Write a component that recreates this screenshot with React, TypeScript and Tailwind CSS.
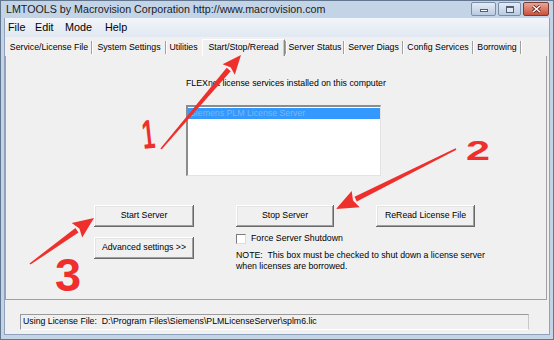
import React from 'react'

const tabs: { label: string; w: number; active?: boolean }[] = [
  { label: 'Service/License File', w: 84 },
  { label: 'System Settings', w: 72 },
  { label: 'Utilities', w: 33 },
  { label: 'Start/Stop/Reread', w: 83, active: true },
  { label: 'Server Status', w: 56 },
  { label: 'Server Diags', w: 57 },
  { label: 'Config Services', w: 68 },
  { label: 'Borrowing', w: 46 },
]

const btn =
  'h-[22px] bg-[#f0f0f0] flex items-center justify-center shadow-[inset_-1px_-1px_#696969,inset_1px_1px_#ffffff,inset_-2px_-2px_#a0a0a0,inset_2px_2px_#e3e3e3]'

function arrow(x1: number, y1: number, x2: number, y2: number, head = 20, hw = 9) {
  const dx = x2 - x1
  const dy = y2 - y1
  const len = Math.hypot(dx, dy)
  const ux = dx / len
  const uy = dy / len
  const nx = -uy
  const ny = ux
  const bx = x2 - head * ux
  const by = y2 - head * uy
  const p = (x: number, y: number) => `${x.toFixed(1)},${y.toFixed(1)}`
  const shaft = [
    p(x1 + nx * 0.8, y1 + ny * 0.8),
    p(bx + nx * 2.6, by + ny * 2.6),
    p(bx - nx * 2.6, by - ny * 2.6),
    p(x1 - nx * 0.8, y1 - ny * 0.8),
  ].join(' ')
  const tip = [p(x2, y2), p(bx + nx * hw, by + ny * hw), p(bx + ux * 3, by + uy * 3), p(bx - nx * hw, by - ny * hw)].join(' ')
  return { shaft, tip }
}

function Annotations() {
  const arrows = [arrow(160, 148, 240, 54, 19, 8), arrow(455, 148, 335, 208, 22, 9), arrow(29, 263, 93, 217, 21, 9)]
  return (
    <>
      <svg className="absolute left-0 top-0 pointer-events-none" width={554} height={340} viewBox="0 0 554 340">
        {arrows.map((a, i) => (
          <g key={i} fill="#ee2f2c">
            <polygon points={a.shaft} />
            <polygon points={a.tip} />
          </g>
        ))}
      </svg>
      <div className="absolute left-[141px] top-[114px] text-[41px] leading-none font-bold text-[#ee2f2c] rotate-[-6deg] scale-x-[0.55] origin-left [font-family:'Liberation_Sans',Arial,sans-serif]">
        1
      </div>
      <div className="absolute left-[465px] top-[137px] text-[27px] leading-none font-bold text-[#ee2f2c] scale-x-[1.6] origin-left [font-family:'Liberation_Sans',Arial,sans-serif]">
        2
      </div>
      <div className="absolute left-[54px] top-[250px] text-[47px] leading-none font-bold text-[#ee2f2c] [font-family:'Liberation_Sans',Arial,sans-serif]">
        3
      </div>
    </>
  )
}

export default function App() {
  return (
    <div className="relative w-[554px] h-[340px] bg-[#c4d4e7] border border-[#62768f] flex flex-col overflow-hidden [font-family:'Liberation_Sans',Arial,sans-serif]">
      {/* Title bar */}
      <div className="h-[17px] flex items-start">
        <div className="pl-[5px] pt-[2px] text-[10.7px] leading-[13px] text-[#1b1b1b]">
          LMTOOLS by Macrovision Corporation http://www.macrovision.com
        </div>
        <div className="ml-auto mr-[4px] mt-[1px] flex gap-[2px]">
          <div className="w-[25px] h-[14px] rounded-[2px] border border-[#7b8ea8] bg-gradient-to-b from-[#e4ecf6] to-[#b9cbe1] flex items-end justify-center pb-[3px]">
            <div className="w-[8px] h-[3px] bg-white border border-[#4f5f74]" />
          </div>
          <div className="w-[23px] h-[14px] rounded-[2px] border border-[#7b8ea8] bg-gradient-to-b from-[#e4ecf6] to-[#b9cbe1] flex items-center justify-center">
            <div className="w-[8px] h-[7px] border border-[#4f5f74] border-t-2 bg-white/40" />
          </div>
          <div className="w-[26px] h-[14px] rounded-[2px] border border-[#7a3b33] bg-gradient-to-b from-[#e9a595] to-[#c8503c] flex items-center justify-center">
            <svg width="9" height="8" viewBox="0 0 9 8">
              <path d="M1 1 L8 7 M8 1 L1 7" stroke="#5b1b12" strokeWidth="3" />
              <path d="M1 1 L8 7 M8 1 L1 7" stroke="#ffffff" strokeWidth="1.6" />
            </svg>
          </div>
        </div>
      </div>

      {/* Client */}
      <div className="flex-1 mx-[3px] mb-[4px] bg-[#f0f0f0] border-l border-r border-b border-[#8ea2bb] flex flex-col">
        {/* Menu */}
        <div className="h-[19px] bg-gradient-to-b from-[#f2f5f9] to-[#e1e8f1] flex items-center text-[10.8px] text-black">
          <span className="ml-[3px] w-[27px]">File</span>
          <span className="w-[30px]">Edit</span>
          <span className="w-[40px]">Mode</span>
          <span>Help</span>
        </div>

        {/* Tabs */}
        <div className="pt-[2px] pl-[2px] h-[19px] flex items-stretch text-[8.75px] text-black">
          {tabs.map((t, i) => (
            <React.Fragment key={t.label}>
              {t.active ? (
                <div
                  className="flex items-center justify-center bg-[#f0f0f0] border-t border-l border-white border-r border-r-[#8a8a8a] shadow-[inset_-1px_0_#c8c8c8]"
                  style={{ width: t.w }}
                >
                  {t.label}
                </div>
              ) : (
                <div className="flex items-center justify-center" style={{ width: t.w }}>
                  {t.label}
                </div>
              )}
              {i < tabs.length - 1 && !t.active && !tabs[i + 1].active && (
                <div className="w-[2px] my-[2px] border-l border-[#a0a0a0] border-r border-r-white" />
              )}
              {i === tabs.length - 1 && <div className="w-[2px] my-[2px] border-l border-[#a0a0a0] border-r border-r-white" />}
              {t.active && <div className="w-[2px] my-[2px] border-l border-[#a0a0a0] border-r border-r-white" />}
              {i < tabs.length - 1 && tabs[i + 1].active && <div className="w-[2px]" />}
            </React.Fragment>
          ))}
        </div>

        {/* Panel */}
        <div className="h-[244px] mr-[2px] border-l border-r border-b border-[#a0a0a0] text-[8.75px] text-black">
          <div className="ml-[180px] mt-[22px] leading-[11px]">FLEXnet license services installed on this computer</div>
          <div className="ml-[180px] mt-[16px] w-[195px] h-[71px] bg-white border-t-2 border-l-2 border-[#8c8c8c] border-r border-b border-r-[#e3e3e3] border-b-[#e3e3e3] pt-[1px]">
            <div className="h-[11px] bg-[#3399ff] text-[#7fb6ee] leading-[11px] pl-[2px]">Siemens PLM License Server</div>
          </div>
          <div className="mt-[29px] flex">
            <div className={`${btn} ml-[88px] w-[100px]`}>Start Server</div>
            <div className={`${btn} ml-[42px] w-[98px]`}>Stop Server</div>
            <div className={`${btn} ml-[42px] w-[99px]`}>ReRead License File</div>
          </div>
          <div className="mt-[6px] flex items-start">
            <div className={`${btn} ml-[88px] mt-[4px] w-[100px]`}>Advanced settings &gt;&gt;</div>
            <div className="ml-[42px] flex flex-col">
              <div className="h-[12px] flex items-center">
                <div className="w-[10px] h-[10px] bg-white border-t border-l border-[#7a7a7a] border-r border-b border-r-[#dcdcdc] border-b-[#dcdcdc]" />
                <span className="ml-[5px]">Force Server Shutdown</span>
              </div>
              <div className="mt-[5px] leading-[11px]">
                <div>NOTE:&nbsp; This box must be checked to shut down a license server</div>
                <div>when licenses are borrowed.</div>
              </div>
            </div>
          </div>
        </div>

        {/* Status */}
        <div className="flex-1 pt-[14px] pl-[15px]">
          <div className="w-[509px] h-[16px] border-t border-l border-[#9a9a9a] border-r border-b border-r-[#c8c8c8] border-b-white flex items-center pl-[2px] text-[8.75px] text-black">
            Using License File:&nbsp; D:\Program Files\Siemens\PLMLicenseServer\splm6.lic
          </div>
        </div>
      </div>

      <Annotations />
    </div>
  )
}
